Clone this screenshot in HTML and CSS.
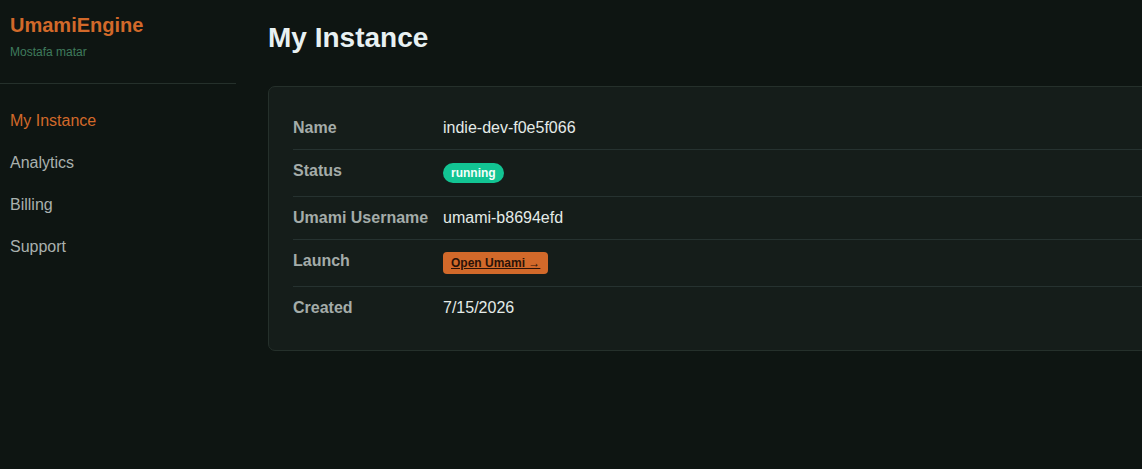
FILE: index.html
```html
<!DOCTYPE html>
<html lang="en">
<head>
<meta charset="utf-8">
<title>UmamiEngine - My Instance</title>
<link rel="stylesheet" href="styles.css">
</head>
<body>
<div class="app">
  <aside class="sidebar">
    <div class="brand">
      <div class="brand-name">UmamiEngine</div>
      <div class="brand-user">Mostafa matar</div>
    </div>
    <nav class="nav">
      <a class="nav-item active" href="#">My Instance</a>
      <a class="nav-item" href="#">Analytics</a>
      <a class="nav-item" href="#">Billing</a>
      <a class="nav-item" href="#">Support</a>
    </nav>
  </aside>
  <main class="main">
    <h1 class="page-title">My Instance</h1>
    <section class="card">
      <div class="row">
        <div class="label">Name</div>
        <div class="value">indie-dev-f0e5f066</div>
      </div>
      <div class="row">
        <div class="label">Status</div>
        <div class="value"><span class="badge">running</span></div>
      </div>
      <div class="row">
        <div class="label">Umami Username</div>
        <div class="value">umami-b8694efd</div>
      </div>
      <div class="row">
        <div class="label">Launch</div>
        <div class="value"><a class="launch" href="#">Open Umami →</a></div>
      </div>
      <div class="row">
        <div class="label">Created</div>
        <div class="value">7/15/2026</div>
      </div>
    </section>
  </main>
</div>
</body>
</html>
```

FILE: styles.css
```css
html, body {
  margin: 0;
  padding: 0;
  height: 100%;
  overflow: hidden;
}
body {
  background: #0e1512;
  font-family: "Liberation Sans", Arial, sans-serif;
  color: #e4ebe8;
}
.app {
  display: flex;
  min-height: 100%;
}
.sidebar {
  width: 236px;
  flex: 0 0 236px;
}
.brand {
  padding: 13px 10px 24px;
  border-bottom: 1px solid #25302b;
}
.brand-name {
  font-size: 20px;
  font-weight: 700;
  line-height: 24px;
  color: #d2692a;
}
.brand-user {
  margin-top: 8px;
  font-size: 12px;
  line-height: 14px;
  color: #3f7b5d;
}
.nav {
  display: flex;
  flex-direction: column;
  padding-top: 16px;
}
.nav-item {
  display: block;
  padding: 12px 10px;
  font-size: 16px;
  line-height: 18px;
  color: #a9b1ae;
  text-decoration: none;
}
.nav-item.active {
  color: #d2692a;
}
.main {
  flex: 1;
  padding: 0 0 0 32px;
  min-width: 0;
  overflow: hidden;
}
.page-title {
  margin: 22px 0 32px;
  font-size: 28px;
  line-height: 32px;
  font-weight: 700;
  color: #e8f1f2;
}
.card {
  width: 980px;
  background: #151d1a;
  border: 1px solid #25302b;
  border-radius: 7px;
  padding: 20px 24px 21px;
}
.row {
  display: flex;
  align-items: flex-start;
  padding: 10px 0;
  border-bottom: 1px solid #263230;
}
.row:last-child {
  border-bottom: none;
}
.label {
  width: 150px;
  flex: 0 0 150px;
  font-size: 16px;
  line-height: 22px;
  font-weight: 700;
  color: #a4aca9;
}
.value {
  font-size: 16px;
  line-height: 22px;
  color: #e4ebe8;
}
.badge {
  display: inline-block;
  margin: 3px 0;
  padding: 0 8px;
  height: 20px;
  line-height: 20px;
  border-radius: 10px;
  background: #12c493;
  color: #f4fffa;
  font-size: 12px;
  font-weight: 700;
  vertical-align: top;
}
.launch {
  display: inline-block;
  margin: 2px 0;
  padding: 0 8px;
  height: 22px;
  line-height: 22px;
  border-radius: 4px;
  background: #d2692a;
  color: #2a1208;
  font-size: 12px;
  font-weight: 700;
  text-decoration: underline;
  vertical-align: top;
}
```
